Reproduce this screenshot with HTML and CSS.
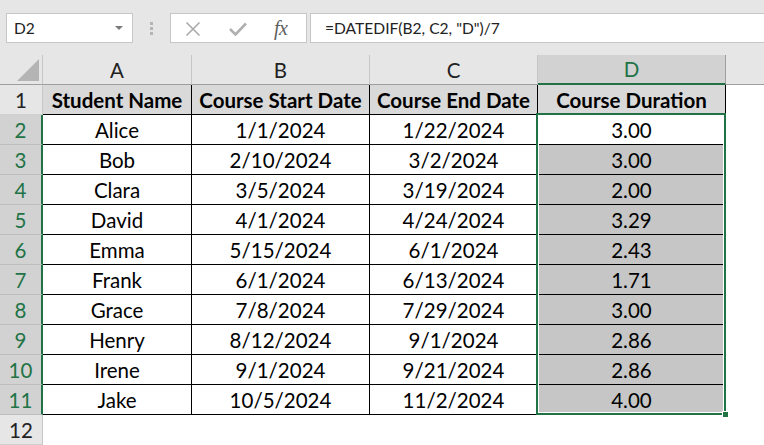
FILE: index.html
```html
<!DOCTYPE html>
<html>
<head>
<meta charset="utf-8">
<link rel="stylesheet" href="styles.css">
</head>
<body>
<div class="app">
  <div class="toolbar">
    <div class="namebox">
      <span class="namebox-text">D2</span>
      <span class="dropdown"></span>
    </div>
    <div class="grip"><span></span><span></span><span></span></div>
    <div class="fxbox">
      <svg class="icon-x" width="16" height="14" viewBox="0 0 16 14"><path d="M1.5 0.5 L14.5 13.5 M14.5 0.5 L1.5 13.5" stroke="#a8a8a8" stroke-width="1.5" fill="none"/></svg>
      <svg class="icon-check" width="18" height="14" viewBox="0 0 18 14"><path d="M1 7 L6.5 12.5 L17 1.5" stroke="#b0b0b0" stroke-width="2.6" fill="none"/></svg>
      <span class="fx">fx</span>
    </div>
    <div class="formula">=DATEDIF(B2, C2, "D")/7</div>
  </div>
  <div class="sheet">
    <div class="corner"><span class="tri"></span></div>
    <div class="colhead">A</div>
    <div class="colhead">B</div>
    <div class="colhead">C</div>
    <div class="colhead sel">D</div>
    <div class="colhead last"></div>

    <div class="rowhead">1</div>
    <div class="cell th">Student Name</div>
    <div class="cell th">Course Start Date</div>
    <div class="cell th">Course End Date</div>
    <div class="cell th">Course Duration</div>
    <div class="blank"></div>

    <div class="rowhead sel">2</div>
    <div class="cell">Alice</div>
    <div class="cell">1/1/2024</div>
    <div class="cell">1/22/2024</div>
    <div class="cell active">3.00</div>
    <div class="blank"></div>

    <div class="rowhead sel">3</div>
    <div class="cell">Bob</div>
    <div class="cell">2/10/2024</div>
    <div class="cell">3/2/2024</div>
    <div class="cell picked">3.00</div>
    <div class="blank"></div>

    <div class="rowhead sel">4</div>
    <div class="cell">Clara</div>
    <div class="cell">3/5/2024</div>
    <div class="cell">3/19/2024</div>
    <div class="cell picked">2.00</div>
    <div class="blank"></div>

    <div class="rowhead sel">5</div>
    <div class="cell">David</div>
    <div class="cell">4/1/2024</div>
    <div class="cell">4/24/2024</div>
    <div class="cell picked">3.29</div>
    <div class="blank"></div>

    <div class="rowhead sel">6</div>
    <div class="cell">Emma</div>
    <div class="cell">5/15/2024</div>
    <div class="cell">6/1/2024</div>
    <div class="cell picked">2.43</div>
    <div class="blank"></div>

    <div class="rowhead sel">7</div>
    <div class="cell">Frank</div>
    <div class="cell">6/1/2024</div>
    <div class="cell">6/13/2024</div>
    <div class="cell picked">1.71</div>
    <div class="blank"></div>

    <div class="rowhead sel">8</div>
    <div class="cell">Grace</div>
    <div class="cell">7/8/2024</div>
    <div class="cell">7/29/2024</div>
    <div class="cell picked">3.00</div>
    <div class="blank"></div>

    <div class="rowhead sel">9</div>
    <div class="cell">Henry</div>
    <div class="cell">8/12/2024</div>
    <div class="cell">9/1/2024</div>
    <div class="cell picked">2.86</div>
    <div class="blank"></div>

    <div class="rowhead sel">10</div>
    <div class="cell">Irene</div>
    <div class="cell">9/1/2024</div>
    <div class="cell">9/21/2024</div>
    <div class="cell picked">2.86</div>
    <div class="blank"></div>

    <div class="rowhead sel">11</div>
    <div class="cell">Jake</div>
    <div class="cell">10/5/2024</div>
    <div class="cell">11/2/2024</div>
    <div class="cell picked">4.00</div>
    <div class="blank"></div>

    <div class="rowhead">12</div>
    <div class="blank"></div>
    <div class="blank"></div>
    <div class="blank"></div>
    <div class="blank"></div>
    <div class="blank"></div>

    <div class="selection"><span class="handle"></span></div>
  </div>
</div>
</body>
</html>
```

FILE: styles.css
```css
* { box-sizing: border-box; }
html, body { margin: 0; padding: 0; }
body {
  width: 764px;
  height: 445px;
  overflow: hidden;
  background: #ffffff;
  font-family: Lato, "Open Sans", sans-serif;
  color: #000;
}
.app { width: 764px; height: 445px; overflow: hidden; }

.toolbar {
  height: 55px;
  background: #e6e6e6;
  display: flex;
  align-items: flex-start;
  padding: 13px 0 0 6px;
}
.namebox {
  width: 127px;
  height: 30px;
  background: #fff;
  border: 1px solid #c6c6c6;
  display: flex;
  align-items: center;
  justify-content: space-between;
  padding: 0 9px 0 7px;
}
.namebox-text { font-size: 15.5px; color: #222; }
.dropdown {
  width: 0; height: 0;
  border-left: 4px solid transparent;
  border-right: 4px solid transparent;
  border-top: 4px solid #7a7a7a;
}
.grip {
  width: 37px;
  height: 30px;
  display: flex;
  flex-direction: column;
  align-items: center;
  justify-content: center;
  gap: 2px;
}
.grip span { width: 3px; height: 3px; background: #b4b4b4; }
.fxbox {
  width: 137px;
  height: 30px;
  background: #fff;
  border: 1px solid #c6c6c6;
  display: flex;
  align-items: center;
  padding-left: 14px;
}
.icon-x { margin-top: 1px; }
.icon-check { margin-left: 28px; margin-top: 2px; }
.fx {
  margin-left: 27px;
  font-family: "Liberation Serif", "DejaVu Serif", serif;
  font-style: italic;
  font-size: 20px;
  color: #5e5e5e;
  letter-spacing: -0.5px;
}
.formula {
  flex: 1;
  margin-left: 3px;
  margin-right: -2px;
  height: 30px;
  background: #fff;
  border: 1px solid #c6c6c6;
  font-size: 15.6px;
  color: #222;
  display: flex;
  align-items: center;
  padding-left: 14px;
}

.sheet {
  position: relative;
  display: grid;
  grid-template-columns: 43px 149px 178px 168px 188px 1fr;
  grid-auto-rows: 30px;
  font-size: 20.5px;
}
.corner {
  background: #e6e6e6;
  border-right: 1px solid #c6c6c6;
  border-bottom: 1px solid #9e9e9e;
  position: relative;
}
.tri {
  position: absolute;
  right: 3px;
  bottom: 3px;
  width: 0; height: 0;
  border-left: 22px solid transparent;
  border-bottom: 22px solid #b4b4b4;
}
.colhead {
  background: #e6e6e6;
  border-right: 1px solid #c6c6c6;
  border-bottom: 1px solid #9e9e9e;
  display: flex;
  align-items: center;
  justify-content: center;
  color: #222;
}
.colhead.sel {
  background: #d2d2d2;
  color: #217346;
  border-bottom: 2px solid #217346;
  border-right-color: #9e9e9e;
}
.colhead.last { border-right: none; }
.rowhead {
  background: #e6e6e6;
  border-right: 1px solid #c6c6c6;
  border-bottom: 1px solid #d0d0d0;
  display: flex;
  align-items: center;
  justify-content: center;
  color: #222;
}
.rowhead.sel {
  background: #d2d2d2;
  color: #217346;
  border-right: 2px solid #217346;
  border-bottom-color: #bdbdbd;
}
.cell {
  border-right: 1px solid #000;
  border-bottom: 1px solid #000;
  display: flex;
  align-items: center;
  justify-content: center;
  white-space: nowrap;
}
.cell.th { background: #d9d9d9; font-weight: 700; }
.cell.active { background: #fff; }
.cell.picked { background: #c6c6c6; }
.blank { background: #fff; }

.selection {
  position: absolute;
  left: 536px;
  top: 58px;
  width: 190px;
  height: 302px;
  border: 2px solid #217346;
  box-shadow: inset 0 0 0 1px #fff;
  pointer-events: none;
}
.handle {
  position: absolute;
  right: -5px;
  bottom: -5px;
  width: 7px;
  height: 7px;
  background: #217346;
  border: 1px solid #fff;
}
```
